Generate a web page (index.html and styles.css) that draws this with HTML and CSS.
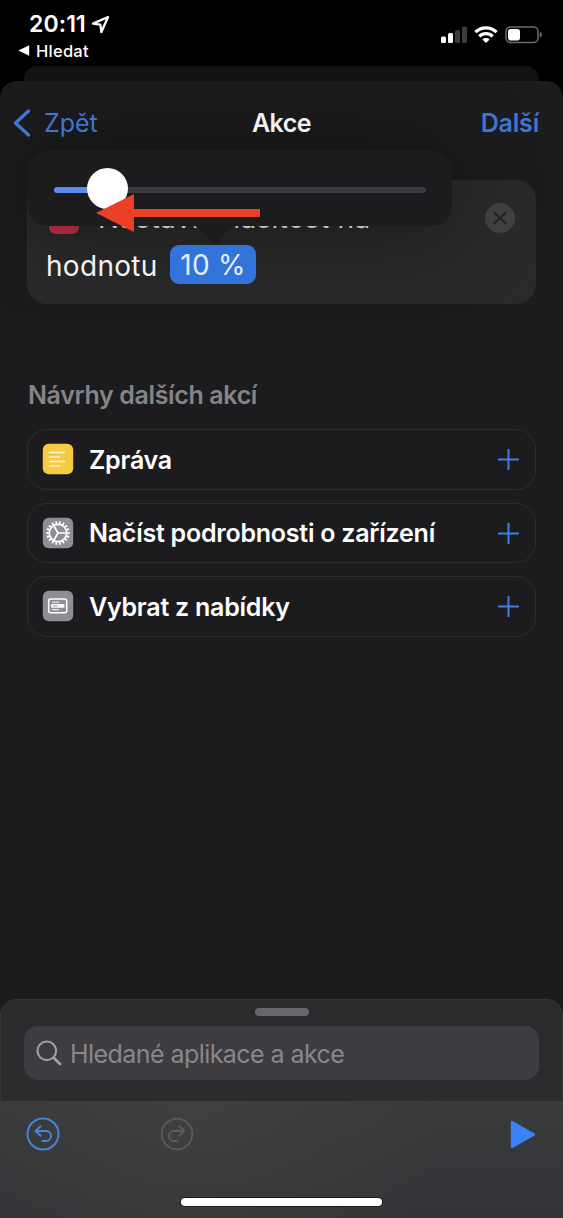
FILE: index.html
```html
<!DOCTYPE html>
<html lang="cs">
<head>
<meta charset="utf-8">
<title>Akce</title>
<link rel="stylesheet" href="styles.css">
</head>
<body>
<div class="phone">
  <header class="status">
    <div class="status-left">
      <div class="clock"><span class="time">20:11</span>
        <svg class="location" width="19" height="19" viewBox="0 0 19 19"><path d="M17 2 L2 8.6 L9.3 9.7 L10.4 17 Z" fill="none" stroke="#fff" stroke-width="2.3" stroke-linejoin="round"/></svg>
      </div>
      <div class="return"><svg width="12" height="11" viewBox="0 0 12 11"><path d="M11.2 .3v10.4L.3 5.5z" fill="#fff"/></svg><span>Hledat</span></div>
    </div>
    <div class="status-right">
      <svg width="27" height="18" viewBox="0 0 27 18"><rect x="0" y="10.500" width="5" height="6.500" rx="1.600" fill="#fff"/><rect x="7" y="7" width="5" height="10" rx="1.600" fill="#fff"/><rect x="14" y="4" width="5" height="13" rx="1.600" fill="#3c3c3c"/><rect x="21" y="0.500" width="5" height="16.500" rx="1.600" fill="#3c3c3c"/></svg>
      <svg class="wifi" width="24" height="18" viewBox="0 0 24 18"><g fill="none" stroke="#fff" stroke-width="3.200"><path d="M1.400 6.200a15.200 15.200 0 0 1 21.200 0"/><path d="M5.300 10.300a9.600 9.600 0 0 1 13.400 0"/></g><path d="M8.400 13.400a5.200 5.200 0 0 1 7.200 0L12 17z" fill="#fff"/></svg>
      <svg class="battery" width="38" height="18" viewBox="0 0 38 18"><rect x="1" y="1" width="32" height="15.500" rx="4.500" fill="none" stroke="#6b6b6b" stroke-width="1.500"/><rect x="3" y="3" width="12" height="11.500" rx="2.800" fill="#fff"/><path d="M34.800 5.800q2.200 1 2.200 3t-2.200 3z" fill="#6b6b6b"/></svg>
    </div>
  </header>
  <div class="back-sheet"></div>
  <main class="sheet">
    <nav class="nav">
      <a class="back"><svg width="20" height="30" viewBox="0 0 20 30"><path d="M17.500 3 L4.500 15 L17.500 27" fill="none" stroke="#3f74cf" stroke-width="3.400" stroke-linecap="round" stroke-linejoin="round"/></svg><span class="back-label">Zpět</span></a>
      <h1 class="title">Akce</h1>
      <a class="next">Další</a>
    </nav>
    <section class="action">
      <div class="action-line"><span class="volume-icon"></span><span class="action-text">Nastavit hlasitost na</span></div>
      <div class="action-line second"><span class="value-label">hodnotu</span><span class="value">10 %</span></div>
      <button class="remove" aria-label="Odstranit"><svg width="30" height="30" viewBox="0 0 30 30"><circle cx="15" cy="15" r="15" fill="#414244"/><path d="M9.700 9.700l10.600 10.600M20.300 9.700L9.700 20.300" stroke="#242526" stroke-width="2.200" stroke-linecap="round"/></svg></button>
      <div class="popover">
        <div class="slider"><div class="fill"></div><div class="thumb"></div></div>
        <svg class="pointer" width="44" height="21" viewBox="0 0 44 21"><path d="M0 0H44C37 0 33 7 29 12L23.500 18.500Q22 20 20.500 18.500L15 12C11 7 7 0 0 0Z" fill="#1c1c1e"/></svg>
        <svg class="arrow" width="165" height="38" viewBox="0 0 165 38"><path d="M0 19L38 0V15H164V23H38V38Z" fill="#ea4025"/></svg>
      </div>
    </section>
    <h2 class="heading">Návrhy dalších akcí</h2>
    <ul class="list">
      <li class="row"><svg class="icon" width="32" height="32" viewBox="0 0 32 32"><rect x=".8" y=".8" width="30.400" height="30.400" rx="6" fill="#f5cb45"/><path d="M7.500 9.500h15M7.500 14h10M7.500 18.500h15M7.500 23h10" stroke="#fff4d1" stroke-width="1.700" stroke-linecap="round"/></svg><span class="label">Zpráva</span><svg class="plus" width="22" height="22" viewBox="0 0 22 22"><path d="M11.500 1.700v19.600M1.700 11.500h19.600" stroke="#407ee4" stroke-width="2" stroke-linecap="round"/></svg></li>
      <li class="row"><svg class="icon" width="32" height="32" viewBox="0 0 32 32"><rect x=".8" y=".8" width="30.400" height="30.400" rx="6" fill="#8e8e93"/><g fill="none" stroke="#fff"><circle cx="16" cy="16" r="8.700" stroke-width="1.700"/><circle cx="16" cy="16" r="10.500" stroke-width="2.600" pathLength="72" stroke-dasharray="2 2" stroke-dashoffset="1"/><path d="M16 16h8.500M16 16l-4.500-7.700M16 16l-4.500 7.700" stroke-width="1.700"/></g></svg><span class="label">Načíst podrobnosti o zařízení</span><svg class="plus" width="22" height="22" viewBox="0 0 22 22"><path d="M11.500 1.700v19.600M1.700 11.500h19.600" stroke="#407ee4" stroke-width="2" stroke-linecap="round"/></svg></li>
      <li class="row"><svg class="icon" width="32" height="32" viewBox="0 0 32 32"><rect x=".8" y=".8" width="30.400" height="30.400" rx="6" fill="#8e8e93"/><rect x="6.700" y="9" width="18" height="13.800" rx="2" fill="none" stroke="#fff" stroke-width="1.500"/><path d="M10 12.200h7.500M10 19.700h7" stroke="#fff" stroke-width="1"/><rect x="9" y="14" width="13.500" height="3.800" rx="1" fill="#fff"/><path d="M10.500 15.900h5" stroke="#8e8e93" stroke-width=".9"/></svg><span class="label">Vybrat z nabídky</span><svg class="plus" width="22" height="22" viewBox="0 0 22 22"><path d="M11.500 1.700v19.600M1.700 11.500h19.600" stroke="#407ee4" stroke-width="2" stroke-linecap="round"/></svg></li>
    </ul>
  </main>
  <section class="drawer">
    <div class="grabber"></div>
    <div class="search"><svg width="26" height="26" viewBox="0 0 26 26"><circle cx="10.800" cy="10.800" r="9.300" fill="none" stroke="#a09fa5" stroke-width="2.100"/><path d="M17.700 17.700L24 24" stroke="#a09fa5" stroke-width="2.800" stroke-linecap="round"/></svg><span class="placeholder">Hledané aplikace a akce</span></div>
  </section>
  <footer class="toolbar">
    <div class="tools">
      <svg class="undo" width="34" height="34" viewBox="0 0 34 34"><g fill="none" stroke="#4583df" stroke-width="2" stroke-linecap="round" stroke-linejoin="round"><circle cx="17" cy="17" r="15.500"/><path d="M14.500 9.200L9.500 14l5 4.800M9.500 14H20a4.900 4.900 0 0 1 0 10h-3.500"/></g></svg>
      <svg class="redo" width="34" height="34" viewBox="0 0 34 34"><g fill="none" stroke="#5a5a5b" stroke-width="1.900" stroke-linecap="round" stroke-linejoin="round"><circle cx="17" cy="17" r="15.300"/><path d="M19.500 9.200l5 4.800-5 4.800M24.500 14H14a4.900 4.900 0 0 0 0 10h3.500"/></g></svg>
      <svg class="play" width="26" height="29" viewBox="0 0 26 29"><path d="M2 2V27L24 14.500Z" fill="#3c82f7" stroke="#3c82f7" stroke-width="2.400" stroke-linejoin="round"/></svg>
    </div>
    <div class="home"></div>
  </footer>
</div>
</body>
</html>
```
FILE: styles.css
```css
* { box-sizing: border-box; }
body { margin: 0; background: #000; }
.phone {
  width: 563px; height: 1218px; overflow: hidden;
  display: flex; flex-direction: column;
  background: #000; color: #fff;
  font-family: Inter, "Liberation Sans", sans-serif;
  white-space: nowrap;
}
svg { display: block; flex: none; }

.status { height: 66px; display: flex; justify-content: space-between; flex: none; }
.status-left { padding: 11px 0 0 18px; }
.clock { display: flex; align-items: center; height: 26px; padding-left: 11px; }
.time { font-size: 23px; font-weight: 600; letter-spacing: .1px; width: 62px; }
.return { display: flex; align-items: center; gap: 6px; height: 27px; font-size: 16.500px; font-weight: 500; letter-spacing: .25px; }
.status-right { display: flex; align-items: flex-start; padding: 26px 20px 0 0; }
.wifi { margin-left: 6px; }
.battery { margin-left: 7px; }

.back-sheet { height: 15px; margin: 0 24px; background: #121212; border-radius: 13px 13px 0 0; flex: none; }
.sheet {
  position: relative; height: 918px; flex: none; overflow: hidden;
  padding: 0 27px; background: #1c1c1e; border-radius: 17px 17px 0 0;
}
.nav { position: relative; z-index: 2; height: 99px; margin: 0 -27px; padding: 0 24px 15px 11px; display: grid; grid-template-columns: 1fr auto 1fr; align-items: center; font-size: 25px; }
.back { display: flex; align-items: center; gap: 13px; color: #3f74cf; }
.title { margin: 0 0 0 13px; font-size: 25px; font-weight: 600; color: #f2f2f2; letter-spacing: -.5px; }
.next { justify-self: end; color: #3f74cf; font-weight: 600; letter-spacing: -.2px; }

.action { position: relative; height: 124px; padding: 17px 18px; border-radius: 20px; background: #2a2a2c; font-size: 28px; letter-spacing: .3px; color: #f2f2f2; }
.action-line { display: flex; align-items: center; height: 44px; }
.action-text { margin-top: -2px; }
.volume-icon { width: 30px; height: 30px; border-radius: 7px; margin: 0 19px 0 4px; background: #bf3145; }
.second { height: 47px; position: relative; z-index: 2; }
.value-label { width: 125px; padding: 2px 0 0 1px; }
.value { height: 39px; width: 86px; padding-top: 1px; border-radius: 9px; background: #3374db; display: flex; align-items: center; justify-content: center; color: #e3edff; }
.remove { position: absolute; top: 23px; right: 21px; padding: 0; border: 0; background: none; }
.popover {
  position: absolute; z-index: 1; left: 1px; top: -30px; width: 424px; height: 76px;
  padding: 37px 26px 0; border-radius: 20px; background: #1c1c1e;
  box-shadow: 0 0 90px rgba(0, 0, 0, .45);
}
.slider { position: relative; height: 6px; border-radius: 3px; background: #3c3b41; }
.fill { width: 52px; height: 6px; border-radius: 3px; background: #5b8df0; }
.thumb { position: absolute; left: 33px; top: -19px; width: 41px; height: 41px; border-radius: 50%; background: #fff; }
.pointer { position: absolute; left: 165px; top: 76px; }
.arrow { position: absolute; left: 68px; top: 44px; }

.heading { margin: 74px 0 0 1px; height: 34px; line-height: 34px; font-size: 25px; font-weight: 600; letter-spacing: -.36px; color: #858489; }
.list { list-style: none; margin: 17px 0 0; padding: 0; display: grid; gap: 13px; }
.row { height: 60.500px; display: flex; align-items: center; padding: 0 16px 0 14px; border: 1px solid #2d2d2f; border-radius: 20px; font-size: 25px; font-weight: 600; letter-spacing: -.24px; }
.label { flex: 1; margin: 1px 0 0 15px; }

.drawer { height: 102px; flex: none; padding: 9px 23px 0; background: #2b2b2d; border: 1px solid #363638; border-bottom: 0; border-radius: 17px 17px 0 0; box-shadow: 0 0 0 17px #1c1c1e; clip-path: inset(-1px 0 0 0); }
.grabber { width: 54px; height: 8px; margin: -1px auto 10px; border-radius: 4px; background: #66656a; }
.search { height: 54px; display: flex; align-items: center; padding-left: 12px; gap: 8px; border-radius: 14px; background: #3d3c41; color: #88878c; font-size: 25px; letter-spacing: -.56px; }
.placeholder { margin-top: 2px; }

.toolbar { height: 117px; flex: none; padding-top: 16px; background: radial-gradient(circle at 35% 0, rgba(72, 70, 68, .5), transparent 65%), linear-gradient(#3a3a3b, #323437); }
.tools { display: flex; align-items: center; height: 34px; padding: 0 27px 0 26px; }
.redo { margin-left: 100px; }
.play { margin-left: auto; }
.home { width: 201px; height: 8px; margin: 47px auto 0; border-radius: 4px; background: #fff; box-shadow: 0 0 0 1px #1b1b1b; }
```
